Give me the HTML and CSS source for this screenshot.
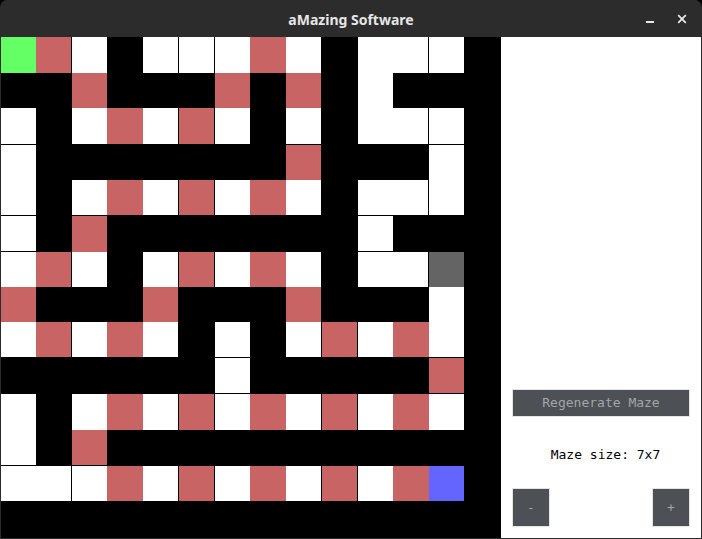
FILE: index.html
```html
<!DOCTYPE html>
<html lang="en">
<head>
<meta charset="utf-8">
<title>aMazing Software</title>
<link rel="stylesheet" href="styles.css">
</head>
<body>
<div class="window">
  <header class="titlebar">
    <div class="tb-side"></div>
    <div class="tb-title">aMazing Software</div>
    <div class="tb-side tb-controls">
      <span class="tb-btn" aria-label="Minimize">
        <svg width="10" height="10" viewBox="0 0 10 10"><rect x="1" y="7" width="8" height="2" fill="#e8e8e8"/></svg>
      </span>
      <span class="tb-btn" aria-label="Close">
        <svg width="10" height="10" viewBox="0 0 10 10"><path d="M1.2 1.2 L8.8 8.8 M8.8 1.2 L1.2 8.8" stroke="#e8e8e8" stroke-width="1.8" fill="none"/></svg>
      </span>
    </div>
  </header>
  <div class="content">
    <div class="maze">
      <div class="row h36"><div class="s"></div><div class="r"></div><div class="w"></div><div class="k"></div><div class="w"></div><div class="w"></div><div class="w"></div><div class="r"></div><div class="w"></div><div class="k"></div><div class="w"></div><div class="w"></div><div class="w"></div><div class="k"></div></div>
      <div class="row h35"><div class="k"></div><div class="k"></div><div class="r"></div><div class="k"></div><div class="k"></div><div class="k"></div><div class="r"></div><div class="k"></div><div class="r"></div><div class="k"></div><div class="w"></div><div class="k"></div><div class="k"></div><div class="k"></div></div>
      <div class="row h37 gb"><div class="w"></div><div class="k"></div><div class="w"></div><div class="r"></div><div class="w"></div><div class="r"></div><div class="w"></div><div class="k"></div><div class="w"></div><div class="k"></div><div class="w"></div><div class="w"></div><div class="w"></div><div class="k"></div></div>
      <div class="row h35"><div class="w"></div><div class="k"></div><div class="k"></div><div class="k"></div><div class="k"></div><div class="k"></div><div class="k"></div><div class="k"></div><div class="r"></div><div class="k"></div><div class="k"></div><div class="k"></div><div class="w"></div><div class="k"></div></div>
      <div class="row h36 gb"><div class="w"></div><div class="k"></div><div class="w"></div><div class="r"></div><div class="w"></div><div class="r"></div><div class="w"></div><div class="r"></div><div class="w"></div><div class="k"></div><div class="w"></div><div class="w"></div><div class="w"></div><div class="k"></div></div>
      <div class="row h36 gb pass"><div class="w"></div><div class="k"></div><div class="r"></div><div class="k"></div><div class="k"></div><div class="k"></div><div class="k"></div><div class="k"></div><div class="k"></div><div class="k"></div><div class="w"></div><div class="k"></div><div class="k"></div><div class="k"></div></div>
      <div class="row h35"><div class="w"></div><div class="r"></div><div class="w"></div><div class="k"></div><div class="w"></div><div class="r"></div><div class="w"></div><div class="r"></div><div class="w"></div><div class="k"></div><div class="w"></div><div class="w"></div><div class="x"></div><div class="k"></div></div>
      <div class="row h35"><div class="r"></div><div class="k"></div><div class="k"></div><div class="k"></div><div class="r"></div><div class="k"></div><div class="k"></div><div class="k"></div><div class="r"></div><div class="k"></div><div class="k"></div><div class="k"></div><div class="w"></div><div class="k"></div></div>
      <div class="row h36 gb"><div class="w"></div><div class="r"></div><div class="w"></div><div class="r"></div><div class="w"></div><div class="k"></div><div class="w"></div><div class="k"></div><div class="w"></div><div class="r"></div><div class="w"></div><div class="r"></div><div class="w"></div><div class="k"></div></div>
      <div class="row h36 gb"><div class="k"></div><div class="k"></div><div class="k"></div><div class="k"></div><div class="k"></div><div class="k"></div><div class="w"></div><div class="k"></div><div class="k"></div><div class="k"></div><div class="k"></div><div class="k"></div><div class="r"></div><div class="k"></div></div>
      <div class="row h36"><div class="w"></div><div class="k"></div><div class="w"></div><div class="r"></div><div class="w"></div><div class="r"></div><div class="w"></div><div class="r"></div><div class="w"></div><div class="r"></div><div class="w"></div><div class="r"></div><div class="w"></div><div class="k"></div></div>
      <div class="row h36 gb"><div class="w"></div><div class="k"></div><div class="r"></div><div class="k"></div><div class="k"></div><div class="k"></div><div class="k"></div><div class="k"></div><div class="k"></div><div class="k"></div><div class="k"></div><div class="k"></div><div class="k"></div><div class="k"></div></div>
      <div class="row h35"><div class="w"></div><div class="w"></div><div class="w"></div><div class="r"></div><div class="w"></div><div class="r"></div><div class="w"></div><div class="r"></div><div class="w"></div><div class="r"></div><div class="w"></div><div class="r"></div><div class="e"></div><div class="k"></div></div>
      <div class="row h37"><div class="k"></div><div class="k"></div><div class="k"></div><div class="k"></div><div class="k"></div><div class="k"></div><div class="k"></div><div class="k"></div><div class="k"></div><div class="k"></div><div class="k"></div><div class="k"></div><div class="k"></div><div class="k"></div></div>
    </div>
    <aside class="panel">
      <button class="btn regen" type="button">Regenerate Maze</button>
      <div class="size-label">Maze size: 7x7</div>
      <div class="size-controls">
        <button class="btn sq" type="button">-</button>
        <button class="btn sq" type="button">+</button>
      </div>
    </aside>
  </div>
</div>
</body>
</html>
```
FILE: styles.css
```css
html, body {
  margin: 0;
  padding: 0;
  background: #000;
}

.window {
  width: 702px;
  height: 539px;
  box-sizing: border-box;
  background: #2c2c2c;
  border-radius: 8px 8px 0 0;
  padding: 0 1px 1px 1px;
  display: flex;
  flex-direction: column;
  overflow: hidden;
}

.titlebar {
  height: 37px;
  flex: none;
  display: grid;
  grid-template-columns: 1fr auto 1fr;
  align-items: center;
  background: #2c2c2c;
}

.tb-title {
  font-family: "Noto Sans", "DejaVu Sans", sans-serif;
  font-weight: 700;
  font-size: 14px;
  color: #e6e6e6;
  padding-top: 1px;
}

.tb-controls {
  display: flex;
  justify-content: flex-end;
  align-items: center;
  gap: 22px;
  padding-right: 14px;
}

.tb-btn {
  display: flex;
  width: 10px;
  height: 10px;
}

.content {
  display: flex;
  height: 501px;
  flex: none;
}

.maze {
  width: 500px;
  height: 501px;
  flex: none;
  background: #000;
  display: flex;
  flex-direction: column;
}

.row {
  display: flex;
  flex: none;
}

.h35 { height: 35px; }
.h36 { height: 36px; }
.h37 { height: 37px; }

.row > div {
  flex: none;
  width: 35px;
  box-sizing: border-box;
}

.row > div:nth-child(2),
.row > div:nth-child(4),
.row > div:nth-child(5),
.row > div:nth-child(6),
.row > div:nth-child(8),
.row > div:nth-child(9),
.row > div:nth-child(10),
.row > div:nth-child(12) {
  width: 36px;
}

.row > div:nth-child(14) {
  width: 37px;
}

.row > div:nth-child(2),
.row > div:nth-child(5),
.row > div:nth-child(6),
.row > div:nth-child(9),
.row > div:nth-child(10),
.row > div:nth-child(12) {
  border-right: 1px solid #000;
}

.row > .r:nth-child(12) {
  border-right: 0;
}

.gb > div {
  border-bottom: 1px solid #000;
}

.pass > .r {
  border-bottom: 0;
}

.w { background: #fff; }
.k { background: #000; }
.r { background: #c86464; }
.s { background: #64ff64; }
.e { background: #6464ff; }
.x { background: #646464; }

.panel {
  width: 200px;
  flex: none;
  background: #fff;
  box-sizing: border-box;
  padding: 353px 12px 0 12px;
  display: flex;
  flex-direction: column;
}

.btn {
  margin: 0;
  padding: 0;
  border: 0;
  background: #4d5054;
  color: #a3a6aa;
  font-family: "DejaVu Sans Mono", "Liberation Mono", monospace;
  font-size: 13px;
  box-shadow: 0 0 0 1px #e4e4e4;
}

.regen {
  height: 26px;
  width: 176px;
  line-height: 26px;
}

.size-label {
  margin-top: 31px;
  height: 15px;
  line-height: 15px;
  font-family: "DejaVu Sans Mono", "Liberation Mono", monospace;
  font-size: 13px;
  color: #000;
  text-align: center;
  padding-left: 9px;
}

.size-controls {
  margin-top: 27px;
  display: flex;
  justify-content: space-between;
}

.sq {
  width: 36px;
  height: 37px;
}
```
